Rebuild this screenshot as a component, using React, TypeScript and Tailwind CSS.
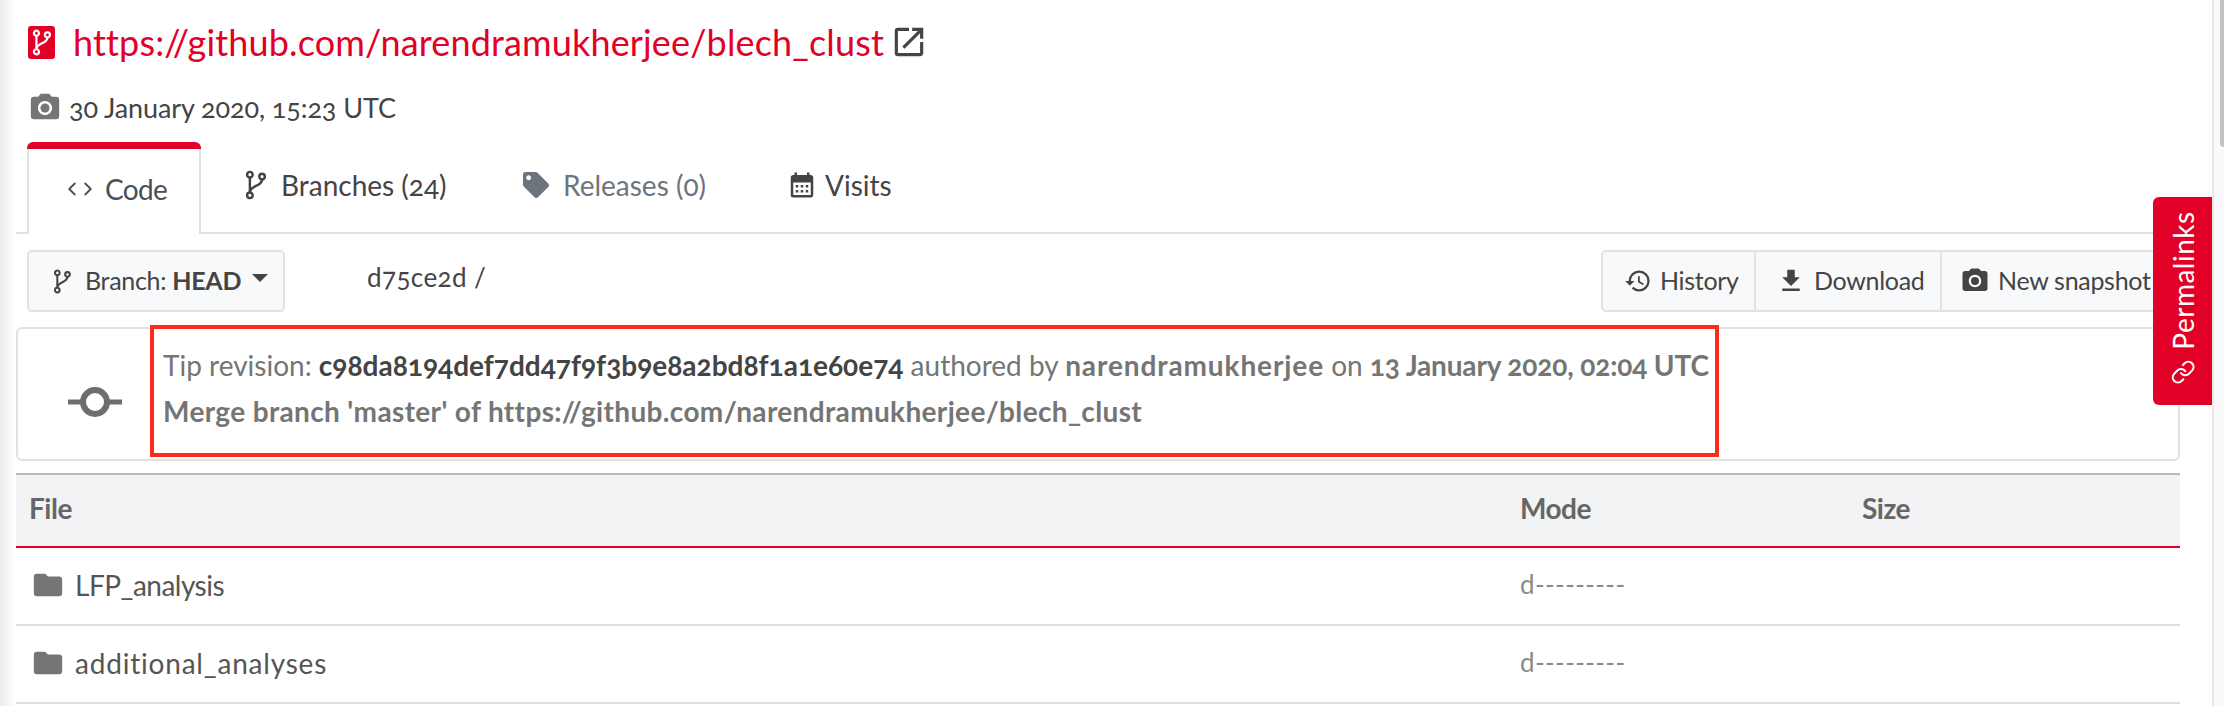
import React from 'react'
import {
  MdCalendarMonth,
  MdCameraAlt,
  MdFileDownload,
  MdFolder,
  MdHistory,
  MdOpenInNew,
} from 'react-icons/md'
import { FaTag } from 'react-icons/fa'
import { LuChevronLeft, LuChevronRight, LuLink } from 'react-icons/lu'

// source-branch glyph drawn by hand, the package versions have the wrong node shapes
function BranchIcon({ className }: { className?: string }) {
  return (
    <svg viewBox="0 0 22 32" fill="none" stroke="currentColor" strokeWidth="2.6" className={className}>
      <circle cx="5" cy="5" r="3" />
      <circle cx="5" cy="27" r="3" />
      <circle cx="18" cy="7" r="3" />
      <path d="M5 8v16M18 10c0 8-13 6-13 14" />
    </svg>
  )
}

function CommitIcon() {
  return (
    <svg viewBox="0 0 54 30" className="h-[30px] w-[54px] text-[#6e6e6e]" fill="none" stroke="currentColor">
      <path d="M0 15h14M40 15h14" strokeWidth="5" />
      <circle cx="27" cy="15" r="12" strokeWidth="6" />
    </svg>
  )
}

function FileRow({ name, nameClass }: { name: string; nameClass: string }) {
  return (
    <div className="grid h-[78px] grid-cols-[1504px_342px_1fr] items-center border-b-2 border-[#dedede]">
      <div className={`flex items-center pb-[2px] pl-[15px] text-[28px] text-[#555] ${nameClass}`}>
        <MdFolder className="mr-[10px] h-[34px] w-[34px] text-[#757575]" />
        {name}
      </div>
      <div className="pb-[3px] text-[26px] tracking-[0.4px] text-[#8a8a8a]">d---------</div>
      <div />
    </div>
  )
}

export default function App() {
  return (
    <div className="flex h-[706px] w-[2224px] overflow-hidden bg-white font-['Lato',sans-serif] oldstyle-nums">
      <div className="w-[16px] shrink-0 bg-gradient-to-r from-[#ececec] to-white" />

      <main className="relative min-w-0 flex-1 pr-[32px]">
        <div className="flex h-[84px] items-center pl-[12px]">
          <span className="flex h-[33px] w-[27px] items-center justify-center rounded-[3px] bg-[#e20026]">
            <BranchIcon className="h-[27px] w-[19px] text-white" />
          </span>
          <a className="ml-[18px] text-[36px] tracking-[0.15px] text-[#e20026]">
            https://github.com/narendramukherjee/blech_clust
          </a>
          <MdOpenInNew className="ml-[6px] h-[38px] w-[38px] text-[#444]" />
        </div>

        <div className="flex h-[48px] items-center pl-[12px] text-[27px] tracking-[-0.1px] text-[#444]">
          <MdCameraAlt className="h-[34px] w-[34px] text-[#757575]" />
          <span className="ml-[7px]">30 January 2020, 15:23 UTC</span>
        </div>

        <div className="mt-[10px] flex h-[92px] border-b-2 border-[#dee2e6] pl-[11px] text-[28px]">
          <div className="flex h-[92px] w-[174px] flex-col overflow-hidden rounded-t-[6px] bg-white text-[#495057]">
            <div className="h-[7px] bg-[#e20026]" />
            <div className="flex flex-1 items-center border-x-2 border-[#dee2e6] pb-[5px] pl-[32px]">
              <LuChevronLeft className="-mr-[6px] h-[22px] w-[22px]" />
              <LuChevronRight className="h-[22px] w-[22px]" />
              <span className="ml-[6px] tracking-[-0.7px]">Code</span>
            </div>
          </div>
          <div className="flex w-[322px] items-center pb-[4px] pl-[44px] text-[#444]">
            <BranchIcon className="h-[30px] w-[21px]" />
            <span className="ml-[15px]">Branches (24)</span>
          </div>
          <div className="flex w-[264px] items-center pb-[4px] text-[#6c757d]">
            <FaTag className="h-[26px] w-[26px]" />
            <span className="ml-[14px]">Releases (0)</span>
          </div>
          <div className="flex items-center pb-[4px] text-[#444]">
            <MdCalendarMonth className="h-[30px] w-[30px]" />
            <span className="ml-[8px]">Visits</span>
          </div>
        </div>

        <div className="mt-[16px] flex h-[62px] pl-[11px] text-[25px] tracking-[-0.3px] text-[#444]">
          <div className="flex w-[258px] items-center rounded-[5px] border-2 border-[#e2e2e2] bg-[#f8f9fa] pl-[24px]">
            <BranchIcon className="h-[25px] w-[18px]" />
            <span className="ml-[14px]">
              Branch: <b>HEAD</b>
            </span>
            <span className="mb-[6px] ml-[11px] border-x-[8px] border-t-[8px] border-x-transparent border-t-[#444]" />
          </div>
          <div className="ml-[82px] mt-[4px] h-[46px] text-[26px] leading-[46px] tracking-[0.4px]">d75ce2d /</div>
          <div className="ml-auto flex w-[579px] rounded-[5px] border-2 border-[#e2e2e2] bg-[#f8f9fa]">
            <div className="flex w-[153px] items-center border-r-2 border-[#e2e2e2] pl-[21px]">
              <MdHistory className="h-[28px] w-[28px]" />
              <span className="ml-[8px]">History</span>
            </div>
            <div className="flex w-[186px] items-center border-r-2 border-[#e2e2e2] pl-[20px]">
              <MdFileDownload className="h-[30px] w-[30px]" />
              <span className="ml-[8px]">Download</span>
            </div>
            <div className="flex items-center pl-[18px]">
              <MdCameraAlt className="h-[30px] w-[30px]" />
              <span className="ml-[8px]">New snapshot</span>
            </div>
          </div>
        </div>

        <div className="mt-[15px] flex h-[134px] rounded-[6px] border-2 border-[#e2e2e2]">
          <div className="flex w-[132px] shrink-0 items-center justify-center pl-[22px] pt-[16px]">
            <CommitIcon />
          </div>
          <div className="-mt-[4px] flex h-[132px] w-[1569px] flex-col justify-center gap-[14px] border-4 border-[#fb2b1e] pb-[6px] pl-[9px] text-[28px] leading-[32px] text-[#757575]">
            <div className="whitespace-nowrap">
              Tip revision: <b className="text-[#444]">c98da8194def7dd47f9f3b9e8a2bd8f1a1e60e74</b> authored by{' '}
              <b className="tracking-[0.9px]">narendramukherjee</b> on{' '}
              <b className="tracking-[-0.15px]">13 January 2020, 02:04 UTC</b>
            </div>
            <div className="font-bold tracking-[0.35px]">
              Merge branch 'master' of https://github.com/narendramukherjee/blech_clust
            </div>
          </div>
        </div>

        <div className="mt-[12px] text-[28px]">
          <div className="grid h-[75px] grid-cols-[1504px_342px_1fr] items-center border-b-2 border-t-[2px] border-b-[#e20026] border-t-[#bbbbbb] bg-[#f2f3f5] pb-[6px] font-bold tracking-[-0.5px] text-[#666]">
            <div className="pl-[13px]">File</div>
            <div>Mode</div>
            <div>Size</div>
          </div>
          <FileRow name="LFP_analysis" nameClass="tracking-[-0.5px]" />
          <FileRow name="additional_analyses" nameClass="tracking-[0.8px]" />
        </div>

        <div className="absolute right-0 top-[197px] flex h-[208px] w-[59px] items-center justify-center rounded-l-[6px] bg-[#e20026] pb-[7px]">
          <div className="flex -rotate-90 items-center whitespace-nowrap text-[28px] tracking-[0.5px] text-white">
            <LuLink className="mr-[10px] h-[25px] w-[25px] rotate-90" />
            Permalinks
          </div>
        </div>
      </main>

      <div className="relative w-[12px] shrink-0 border-l-2 border-[#e8e8e8] bg-[#fafafa]">
        <div className="absolute right-0 top-0 h-[147px] w-[4px] rounded-bl-[4px] bg-[#c2c2c2]" />
      </div>
    </div>
  )
}
